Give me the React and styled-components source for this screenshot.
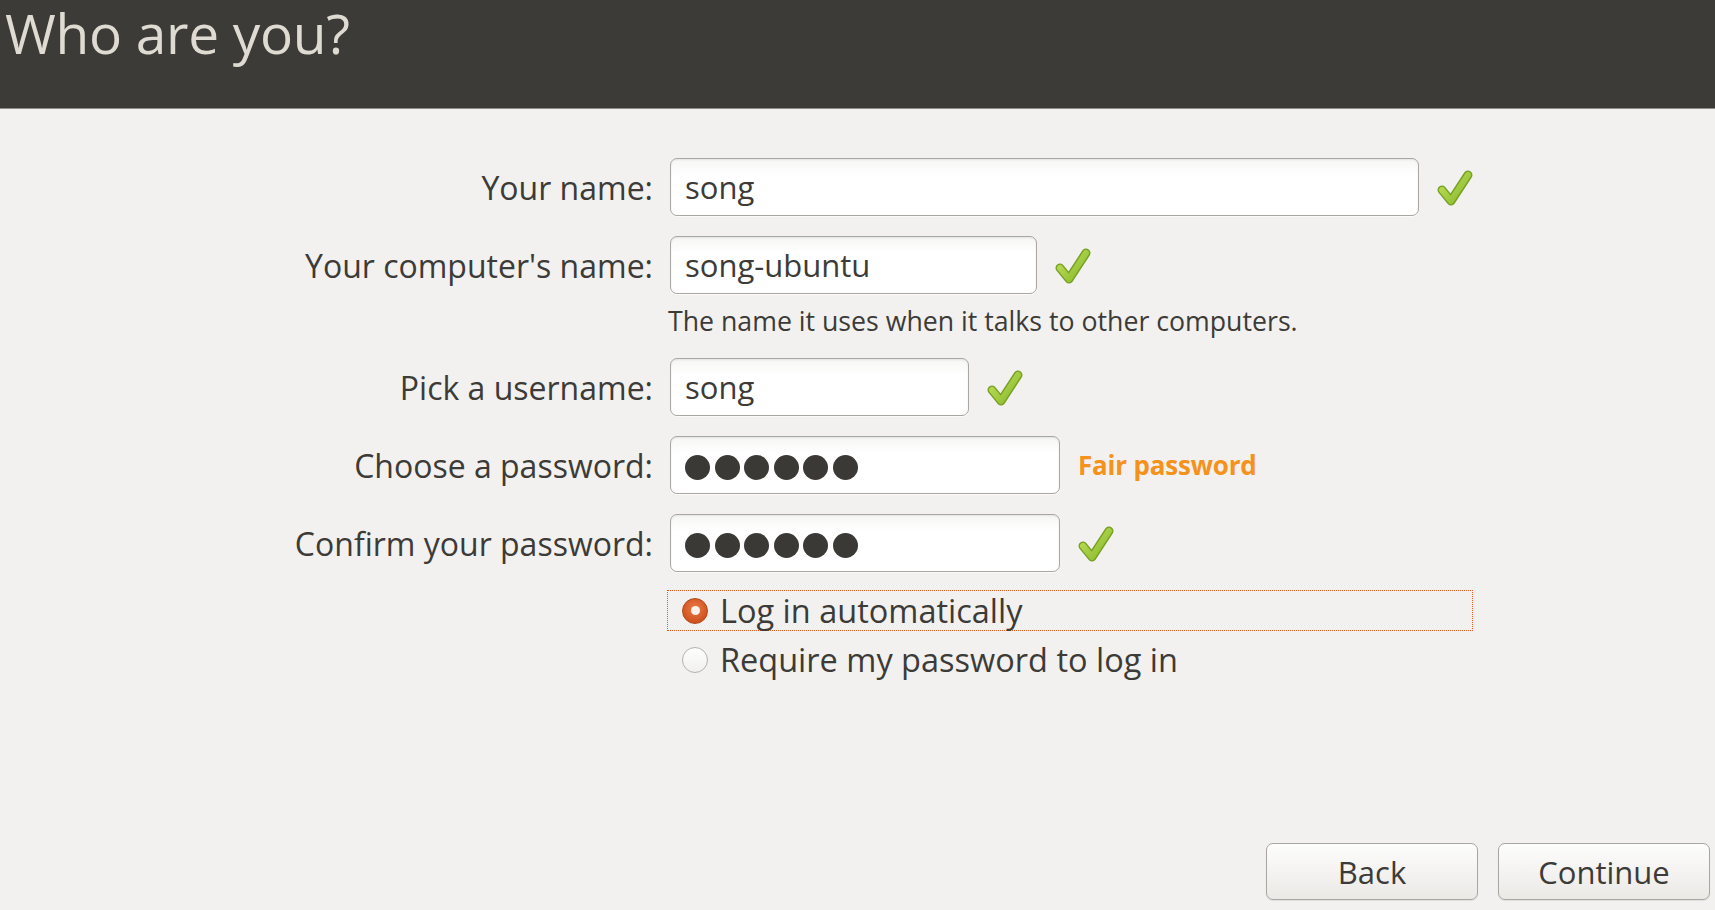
import React from "react";
import styled, { createGlobalStyle } from "styled-components";

const GlobalStyle = createGlobalStyle`
  html, body {
    margin: 0;
    padding: 0;
    background: #f2f1f0;
  }
  body {
    font-family: "Open Sans", "Noto Sans", "DejaVu Sans", sans-serif;
    color: #3c3b37;
  }
`;

const Page = styled.div`
  min-height: 100vh;
  display: flex;
  flex-direction: column;
  box-sizing: border-box;
`;

const Header = styled.header`
  height: 109px;
  box-sizing: border-box;
  background: #3c3b37;
  border-bottom: 1px solid #8f8d88;
  padding: 0 0 0 5px;
`;

const Title = styled.h1`
  margin: 0;
  font-size: 55px;
  font-weight: 400;
  line-height: 66px;
  color: #dfdbd2;
  letter-spacing: -0.3px;
  white-space: nowrap;
`;

const Form = styled.div`
  display: grid;
  grid-template-columns: 653px 803px;
  column-gap: 17px;
  row-gap: 20px;
  align-items: center;
  margin-top: 49px;
`;

const Label = styled.div`
  grid-column: 1;
  text-align: right;
  font-size: 32px;
  white-space: nowrap;
`;

const Field = styled.div`
  grid-column: 2;
  display: flex;
  align-items: center;
  gap: 18px;
`;

const Input = styled.div`
  width: ${(p) => p.width}px;
  height: 58px;
  box-sizing: border-box;
  display: flex;
  align-items: center;
  gap: 4.6px;
  padding-left: 14px;
  border: 1px solid #aaa6a1;
  border-radius: 7px;
  background: linear-gradient(#f6f6f5, #ffffff 30%);
  box-shadow: inset 0 1px 2px rgba(0, 0, 0, 0.08), 0 1px 0 rgba(255, 255, 255, 0.7);
  font-size: 31px;
  color: #3c3b37;
`;

const Dot = styled.span`
  width: 25px;
  height: 25px;
  margin-top: 5px;
  border-radius: 50%;
  background: #3a3935;
`;

const Hint = styled.div`
  grid-column: 2;
  font-size: 26.7px;
  line-height: 24px;
  margin: -5px 0 5px -2px;
  white-space: nowrap;
`;

const Strength = styled.span`
  font-size: 26px;
  font-weight: 700;
  color: #f5921b;
  letter-spacing: -0.2px;
`;

const RadioGroup = styled.div`
  grid-column: 2;
  display: flex;
  flex-direction: column;
  gap: 8px;
  margin: -2px 0 0 -3px;
`;

const Option = styled.div`
  height: 41px;
  box-sizing: border-box;
  display: flex;
  align-items: center;
  gap: 12px;
  padding-left: 14px;
  border: 1px dotted ${(p) => (p.focused ? "#e4571f" : "transparent")};
  font-size: 32.5px;
  white-space: nowrap;
`;

const RadioMark = styled.span`
  width: 26px;
  height: 26px;
  box-sizing: border-box;
  border-radius: 50%;
  display: flex;
  align-items: center;
  justify-content: center;
  border: 1px solid ${(p) => (p.checked ? "#b04817" : "#b5b2ad")};
  background: ${(p) =>
    p.checked
      ? "radial-gradient(circle at 50% 40%, #ec7c48, #d0531f 70%)"
      : "linear-gradient(#ffffff, #f1f0ee)"};
  &::after {
    content: "";
    width: 9px;
    height: 9px;
    border-radius: 50%;
    background: #fbf2ec;
    display: ${(p) => (p.checked ? "block" : "none")};
  }
`;

const Footer = styled.div`
  margin-top: auto;
  display: flex;
  justify-content: flex-end;
  gap: 20px;
  padding: 0 5px 10px 0;
`;

const Button = styled.button`
  width: 212px;
  height: 57px;
  border: 1px solid #a9a5a0;
  border-radius: 7px;
  background: linear-gradient(#fdfdfc, #ebe9e6);
  box-shadow: 0 1px 1px rgba(0, 0, 0, 0.08);
  font-family: "Open Sans", "Noto Sans", sans-serif;
  font-size: 31px;
  color: #3c3b37;
  padding: 0;
`;

const Check = () => (
  <svg width="36" height="37" viewBox="0 0 36 37">
    <defs>
      <linearGradient id="chk" x1="0" y1="0" x2="1" y2="1">
        <stop offset="0" stopColor="#c2e05a" />
        <stop offset="1" stopColor="#86b82a" />
      </linearGradient>
    </defs>
    <path
      d="M5 21 L14 32 L31 6"
      fill="none"
      stroke="#76a122"
      strokeWidth="9"
      strokeLinecap="round"
      strokeLinejoin="round"
    />
    <path
      d="M5 21 L14 32 L31 6"
      fill="none"
      stroke="url(#chk)"
      strokeWidth="6"
      strokeLinecap="round"
      strokeLinejoin="round"
    />
  </svg>
);

const Password = () => (
  <Input width={390}>
    {[0, 1, 2, 3, 4, 5].map((i) => (
      <Dot key={i} />
    ))}
  </Input>
);

const App = () => {
  return (
    <Page>
      <GlobalStyle />
      <Header>
        <Title>Who are you?</Title>
      </Header>
      <Form>
        <Label>Your name:</Label>
        <Field>
          <Input width={750}>song</Input>
          <Check />
        </Field>

        <Label>Your computer's name:</Label>
        <Field>
          <Input width={367}>song-ubuntu</Input>
          <Check />
        </Field>
        <Hint>The name it uses when it talks to other computers.</Hint>

        <Label>Pick a username:</Label>
        <Field>
          <Input width={299}>song</Input>
          <Check />
        </Field>

        <Label>Choose a password:</Label>
        <Field>
          <Password />
          <Strength>Fair password</Strength>
        </Field>

        <Label>Confirm your password:</Label>
        <Field>
          <Password />
          <Check />
        </Field>

        <RadioGroup>
          <Option focused>
            <RadioMark checked />
            Log in automatically
          </Option>
          <Option>
            <RadioMark />
            Require my password to log in
          </Option>
        </RadioGroup>
      </Form>
      <Footer>
        <Button>Back</Button>
        <Button>Continue</Button>
      </Footer>
    </Page>
  );
};

export default App;
